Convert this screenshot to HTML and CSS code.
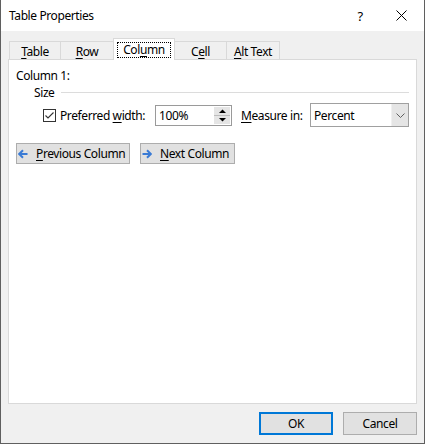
FILE: index.html
```html
<!DOCTYPE html>
<html>
<head>
<meta charset="utf-8">
<title>Table Properties</title>
<link rel="stylesheet" href="styles.css">
</head>
<body>
<div class="window">
  <div class="titlebar">
    <span class="title">Table Properties</span>
    <span class="caption-btn help">?</span>
    <span class="caption-btn close">
      <svg width="11" height="11" viewBox="0 0 11 11"><path d="M0.5 0.5L10.5 10.5M10.5 0.5L0.5 10.5" stroke="#000" stroke-width="1" fill="none"/></svg>
    </span>
  </div>
  <div class="client">
    <div class="tabs">
      <div class="tab tab-table"><span><u>T</u>able</span></div>
      <div class="tab tab-row"><span><u>R</u>ow</span></div>
      <div class="tab tab-column selected"><span class="focus">Col<u>u</u>mn</span></div>
      <div class="tab tab-cell"><span>C<u>e</u>ll</span></div>
      <div class="tab tab-alt"><span><u>A</u>lt Text</span></div>
    </div>
    <div class="panel">
      <div class="heading">Column 1:</div>
      <div class="group-row">
        <span class="group-label">Size</span>
        <span class="group-line"></span>
      </div>
      <div class="width-row">
        <span class="checkbox">
          <svg width="11" height="11" viewBox="0 0 11 11"><polyline points="1.5,5.5 4,8 9.5,2.5" fill="none" stroke="#333" stroke-width="1.1"/></svg>
        </span>
        <span class="pref-label">Preferred <u>w</u>idth:</span>
        <span class="spin-input">
          <span class="spin-value">100%</span>
          <span class="spinner">
            <span class="spin-btn up"><svg width="7" height="4" viewBox="0 0 7 4"><polygon points="0,4 7,4 3.5,0.5" fill="#000"/></svg></span>
            <span class="spin-btn down"><svg width="7" height="4" viewBox="0 0 7 4"><polygon points="0,0 7,0 3.5,3.5" fill="#000"/></svg></span>
          </span>
        </span>
        <span class="measure-label"><u>M</u>easure in:</span>
        <span class="combo">
          <span class="combo-value">Percent</span>
          <span class="combo-btn"><svg width="9" height="5" viewBox="0 0 9 5"><polyline points="0.5,0.5 4.5,4.5 8.5,0.5" fill="none" stroke="#606060" stroke-width="1"/></svg></span>
        </span>
      </div>
      <div class="nav-row">
        <span class="btn nav-btn prev">
          <svg class="arrow" width="10" height="10" viewBox="0 0 10 10"><path d="M9.5 5H1.5M5 1.2L1.2 5L5 8.8" fill="none" stroke="#3a7bd5" stroke-width="2"/></svg>
          <span class="nav-text"><u>P</u>revious Column</span>
        </span>
        <span class="btn nav-btn next">
          <svg class="arrow" width="10" height="10" viewBox="0 0 10 10"><path d="M0.5 5H8.5M5 1.2L8.8 5L5 8.8" fill="none" stroke="#3a7bd5" stroke-width="2"/></svg>
          <span class="nav-text"><u>N</u>ext Column</span>
        </span>
      </div>
    </div>
    <div class="footer">
      <span class="btn dlg-btn default">OK</span>
      <span class="btn dlg-btn">Cancel</span>
    </div>
  </div>
</div>
</body>
</html>
```
FILE: styles.css
```css
* { box-sizing: border-box; }
html, body { margin: 0; padding: 0; }
body {
  width: 425px;
  height: 444px;
  font-family: "Noto Sans", "Liberation Sans", sans-serif;
  font-size: 12px;
  letter-spacing: -0.4px;
  color: #000;
  background: #f0f0f0;
  overflow: hidden;
}
u { text-decoration: underline; text-underline-offset: 2px; text-decoration-thickness: 1px; }

.window {
  width: 425px;
  height: 444px;
  border: 1px solid #5f5f5f;
  border-top: none;
  display: flex;
  flex-direction: column;
  background: #f0f0f0;
}

.titlebar {
  flex: none;
  height: 31px;
  background: #fff;
  display: flex;
  align-items: center;
  padding-left: 8px;
}
.title { flex: 1; line-height: 16px; }
.caption-btn {
  height: 31px;
  display: flex;
  align-items: center;
  justify-content: center;
}
.help { width: 36px; font-size: 13px; }
.close { width: 46px; }

.client {
  flex: 1;
  display: flex;
  flex-direction: column;
  padding: 7px 7px 8px 7px;
}

.tabs {
  flex: none;
  height: 21px;
  display: flex;
  align-items: flex-end;
  padding-left: 1px;
}
.tab {
  height: 18px;
  border: 1px solid #d9d9d9;
  border-bottom: none;
  background: #f0f0f0;
  margin-left: -1px;
  display: flex;
  align-items: center;
  justify-content: center;
  padding-top: 1px;
  line-height: 15px;
  white-space: nowrap;
}
.tab-table { width: 52px; margin-left: 0; }
.tab-row { width: 54px; }
.tab-column { width: 62px; }
.tab-cell { width: 53px; }
.tab-alt { width: 54px; }
.tab.selected {
  height: 22px;
  background: #fff;
  margin-bottom: -1px;
  position: relative;
  z-index: 1;
  padding-top: 0;
}
.focus {
  border: 1px dotted #000;
  padding: 0 5px;
  line-height: 14px;
}

.panel {
  flex: 1;
  background: #fff;
  border: 1px solid #d9d9d9;
  padding: 8px 7px 0 7px;
}
.heading { line-height: 16px; }

.group-row {
  height: 16px;
  margin-left: 18px;
  display: flex;
  align-items: center;
}
.group-line {
  flex: 1;
  margin-left: 6px;
  border-top: 1px solid #dcdcdc;
}

.width-row {
  margin-top: 3px;
  height: 24px;
  margin-left: 27px;
  display: flex;
  align-items: center;
}
.checkbox {
  width: 13px;
  height: 13px;
  border: 1px solid #333;
  display: flex;
  align-items: center;
  justify-content: center;
  flex: none;
}
.pref-label { width: 99px; padding-left: 4px; flex: none; white-space: nowrap; }
.spin-input {
  width: 77px;
  height: 21px;
  border: 1px solid #9a9a9a;
  display: flex;
  align-items: center;
  padding: 1px;
  flex: none;
}
.spin-value { flex: 1; padding-left: 2px; }
.spinner {
  width: 16px;
  height: 17px;
  display: flex;
  flex-direction: column;
}
.spin-btn {
  flex: 1;
  background: #e5e5e5;
  display: flex;
  align-items: center;
  justify-content: center;
}
.spin-btn.down { border-top: 1px solid #bdbdbd; }
.measure-label { width: 78px; padding-left: 9px; flex: none; white-space: nowrap; }
.combo {
  width: 99px;
  height: 24px;
  border: 1px solid #a0a0a0;
  display: flex;
  align-items: stretch;
  flex: none;
}
.combo-value { flex: 1; padding-left: 3px; display: flex; align-items: center; }
.combo-btn {
  width: 17px;
  background: #e5e5e5;
  border-left: 1px solid #f0f0f0;
  display: flex;
  align-items: center;
  justify-content: center;
}

.btn {
  background: #e1e1e1;
  border: 1px solid #adadad;
  display: flex;
  align-items: center;
  justify-content: center;
  white-space: nowrap;
}
.nav-row {
  margin-top: 16px;
  display: flex;
  gap: 10px;
}
.nav-btn {
  height: 21px;
  justify-content: flex-start;
  padding-left: 1px;
  gap: 8px;
}
.arrow { flex: none; }
.nav-btn.prev { width: 114px; }
.nav-btn.next { width: 95px; }

.footer {
  flex: none;
  margin-top: 8px;
  display: flex;
  justify-content: flex-end;
  gap: 10px;
}
.dlg-btn { width: 74px; height: 23px; }
.dlg-btn.default { border: 2px solid #0078d7; }
```
